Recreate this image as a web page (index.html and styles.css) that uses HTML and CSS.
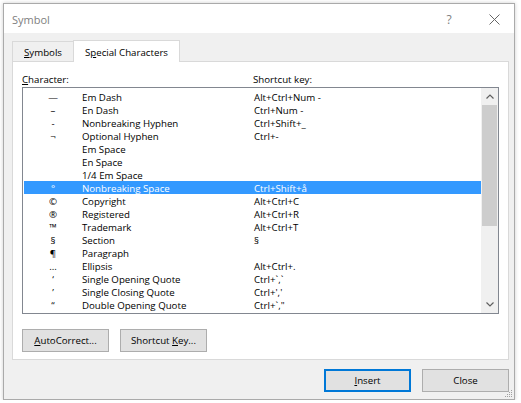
FILE: index.html
```html
<!DOCTYPE html>
<html lang="en">
<head>
    <meta charset="UTF-8">
    <meta name="viewport" content="width=device-width, initial-scale=1.0">
    <title>Symbol</title>
    <link rel="stylesheet" href="styles.css">
</head>
<body>
    <div class="window">
        <div class="titlebar">
            <span class="title">Symbol</span>
            <span class="caption-btn help">?</span>
            <span class="caption-btn close">
                <svg width="11" height="11" viewBox="0 0 11 11">
                    <path d="M0.5 0.5 L10.5 10.5 M10.5 0.5 L0.5 10.5" stroke="#666" stroke-width="1" fill="none"/>
                </svg>
            </span>
        </div>

        <div class="content">
            <div class="tabs">
                <div class="tab"><u>S</u>ymbols</div>
                <div class="tab active">S<u>p</u>ecial Characters</div>
            </div>

            <div class="panel">
                <div class="labels">
                    <span class="label-char"><u>C</u>haracter:</span>
                    <span>Shortcut key:</span>
                </div>

                <div class="listbox">
                    <div class="rows">
                        <div class="row"><span class="sym">&mdash;</span><span>Em Dash</span><span>Alt+Ctrl+Num -</span></div>
                        <div class="row"><span class="sym">&ndash;</span><span>En Dash</span><span>Ctrl+Num -</span></div>
                        <div class="row"><span class="sym">-</span><span>Nonbreaking Hyphen</span><span>Ctrl+Shift+_</span></div>
                        <div class="row"><span class="sym">&not;</span><span>Optional Hyphen</span><span>Ctrl+-</span></div>
                        <div class="row"><span class="sym"></span><span>Em Space</span><span></span></div>
                        <div class="row"><span class="sym"></span><span>En Space</span><span></span></div>
                        <div class="row"><span class="sym"></span><span>1/4 Em Space</span><span></span></div>
                        <div class="row selected"><span class="sym">&deg;</span><span>Nonbreaking Space</span><span>Ctrl+Shift+å</span></div>
                        <div class="row"><span class="sym">&copy;</span><span>Copyright</span><span>Alt+Ctrl+C</span></div>
                        <div class="row"><span class="sym">&reg;</span><span>Registered</span><span>Alt+Ctrl+R</span></div>
                        <div class="row"><span class="sym">&trade;</span><span>Trademark</span><span>Alt+Ctrl+T</span></div>
                        <div class="row"><span class="sym">&sect;</span><span>Section</span><span>&sect;</span></div>
                        <div class="row"><span class="sym">&para;</span><span>Paragraph</span><span></span></div>
                        <div class="row"><span class="sym">&hellip;</span><span>Ellipsis</span><span>Alt+Ctrl+.</span></div>
                        <div class="row"><span class="sym">&lsquo;</span><span>Single Opening Quote</span><span>Ctrl+`,`</span></div>
                        <div class="row"><span class="sym">&rsquo;</span><span>Single Closing Quote</span><span>Ctrl+','</span></div>
                        <div class="row"><span class="sym">&ldquo;</span><span>Double Opening Quote</span><span>Ctrl+`,"</span></div>
                    </div>
                    <div class="scrollbar">
                        <div class="arrow">
                            <svg width="8" height="5" viewBox="0 0 8 5">
                                <path d="M0.5 4.5 L4 1 L7.5 4.5" stroke="#606060" stroke-width="1.2" fill="none"/>
                            </svg>
                        </div>
                        <div class="track">
                            <div class="thumb"></div>
                        </div>
                        <div class="arrow">
                            <svg width="8" height="5" viewBox="0 0 8 5">
                                <path d="M0.5 0.5 L4 4 L7.5 0.5" stroke="#606060" stroke-width="1.2" fill="none"/>
                            </svg>
                        </div>
                    </div>
                </div>

                <div class="panel-buttons">
                    <button class="btn"><u>A</u>utoCorrect...</button>
                    <button class="btn">Shortcut <u>K</u>ey...</button>
                </div>
            </div>

            <div class="dialog-buttons">
                <button class="btn default"><u>I</u>nsert</button>
                <button class="btn">Close</button>
            </div>
        </div>

        <svg class="grip" width="8" height="8" viewBox="0 0 8 8">
            <rect x="6" y="0" width="1" height="1" fill="#a0a0a0"/>
            <rect x="4" y="2" width="1" height="1" fill="#a0a0a0"/>
            <rect x="6" y="2" width="1" height="1" fill="#a0a0a0"/>
            <rect x="2" y="4" width="1" height="1" fill="#a0a0a0"/>
            <rect x="4" y="4" width="1" height="1" fill="#a0a0a0"/>
            <rect x="6" y="4" width="1" height="1" fill="#a0a0a0"/>
            <rect x="0" y="6" width="1" height="1" fill="#a0a0a0"/>
            <rect x="2" y="6" width="1" height="1" fill="#a0a0a0"/>
            <rect x="4" y="6" width="1" height="1" fill="#a0a0a0"/>
            <rect x="6" y="6" width="1" height="1" fill="#a0a0a0"/>
        </svg>
    </div>
</body>
</html>
```

FILE: styles.css
```css
body {
    margin: 0;
    background-color: #fff;
    font-family: "Open Sans", "Liberation Sans", sans-serif;
    font-size: 9.7px;
    color: #000;
}

u {
    text-decoration: underline;
    text-underline-offset: 1px;
}

.window {
    position: relative;
    box-sizing: border-box;
    margin: 3px 0 0 3px;
    width: 512px;
    height: 397px;
    border: 1px solid #aaaaaa;
    box-shadow: 0 0 4px rgba(0, 0, 0, 0.2);
    display: flex;
    flex-direction: column;
}

.titlebar {
    height: 29px;
    background-color: #fff;
    display: flex;
    align-items: center;
    padding-left: 8px;
    padding-top: 1px;
    box-sizing: border-box;
}

.title {
    flex: 1;
    font-size: 11px;
    color: #808080;
}

.caption-btn {
    display: flex;
    justify-content: center;
    align-items: center;
    height: 28px;
}

.help {
    width: 50px;
    font-size: 12px;
    color: #808080;
}

.close {
    width: 40px;
}

.content {
    flex: 1;
    background-color: #f0f0f0;
    padding: 7px 5px 0 8px;
}

.tabs {
    display: flex;
    align-items: flex-end;
    height: 21px;
}

.tab {
    box-sizing: border-box;
    height: 20px;
    padding: 4px 11px 0 11px;
    border: 1px solid #d9d9d9;
    border-bottom: none;
    border-right: none;
}

.tab.active {
    position: relative;
    z-index: 1;
    height: 22px;
    margin-bottom: -1px;
    padding-top: 5px;
    background-color: #fff;
    border-right: 1px solid #d9d9d9;
}

.panel {
    box-sizing: border-box;
    height: 299px;
    background-color: #fff;
    border: 1px solid #d9d9d9;
    padding: 11px 9px 0 9px;
}

.labels {
    display: flex;
    height: 13px;
    line-height: 13px;
    margin-bottom: 1px;
}

.label-char {
    width: 231px;
}

.listbox {
    box-sizing: border-box;
    height: 227px;
    border: 1px solid #828790;
    display: flex;
}

.rows {
    flex: 1;
    padding: 2px 0 0 1px;
    overflow: hidden;
}

.row {
    box-sizing: border-box;
    display: grid;
    grid-template-columns: 58px 172px 1fr;
    height: 13px;
    padding-top: 1px;
    line-height: 13px;
    white-space: nowrap;
}

.row .sym {
    text-align: center;
}

.row.selected {
    background-color: #3399ff;
    color: #fff;
}

.scrollbar {
    width: 17px;
    background-color: #f0f0f0;
    display: flex;
    flex-direction: column;
}

.arrow {
    height: 17px;
    display: flex;
    justify-content: center;
    align-items: center;
}

.track {
    flex: 1;
}

.thumb {
    height: 121px;
    margin: 0 1px;
    background-color: #cdcdcd;
}

.panel-buttons {
    display: flex;
    gap: 11px;
    margin-top: 15px;
}

.btn {
    box-sizing: border-box;
    width: 87px;
    height: 23px;
    padding: 0;
    background-color: #e1e1e1;
    border: 1px solid #adadad;
    font-family: inherit;
    font-size: 9.7px;
    color: #000;
}

.btn.default {
    border: 2px solid #0078d7;
}

.dialog-buttons {
    display: flex;
    justify-content: flex-end;
    gap: 11px;
    margin-top: 9px;
}

.grip {
    position: absolute;
    right: 1px;
    bottom: 1px;
}
```
